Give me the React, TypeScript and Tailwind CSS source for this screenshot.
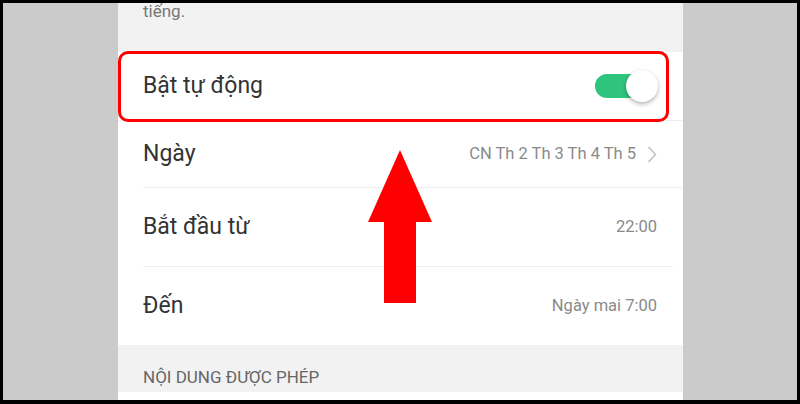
import React from 'react';

const rows = [
  { label: 'Ngày', value: 'CN Th 2 Th 3 Th 4 Th 5', chevron: true, h: 'h-[66px]', line: 'mr-0' },
  { label: 'Bắt đầu từ', value: '22:00', chevron: false, h: 'h-[78px]', line: 'mr-[10px]' },
  { label: 'Đến', value: 'Ngày mai 7:00', chevron: false, h: 'h-[78px]', line: '' },
];

function Toggle() {
  return (
    <div className="relative w-[63px] h-[32px]">
      <div className="absolute left-0 top-[4px] w-[50px] h-[24px] rounded-full bg-[#2ec47e]" />
      <div className="absolute right-0 top-0 w-[32px] h-[32px] rounded-full bg-white shadow-[0_2px_4px_rgba(0,0,0,0.3)]" />
    </div>
  );
}

function Chevron() {
  return (
    <svg width="10" height="17" viewBox="0 0 10 17" fill="none">
      <path d="M1.5 1 L8.5 8.5 L1.5 16" stroke="#bdbdbd" strokeWidth="1.4" />
    </svg>
  );
}

export default function App() {
  return (
    <div
      className="w-[800px] h-[404px] bg-black pt-[3px] pl-[3px] pr-[3px] pb-[4px] overflow-hidden"
      style={{ fontFamily: 'Roboto, "Noto Sans", sans-serif' }}
    >
      <div className="flex h-full bg-[#cbcbcb]">
        <div className="w-[115px] shrink-0" />

        {/* phone screen */}
        <div className="relative w-[565px] shrink-0 flex flex-col bg-white overflow-hidden">
          <div className="h-[49px] bg-[#f2f2f2] pl-[25px]">
            <p className="-mt-[2px] text-[17px] leading-[20px] text-[#777]">tiếng.</p>
          </div>

          <div className="h-[68px] flex items-center justify-between pl-[25px] pr-[25px]">
            <span className="text-[23px] text-[#333]">Bật tự động</span>
            <Toggle />
          </div>
          <div className="h-px bg-[#eeeeee]" />

          {rows.map((r, i) => (
            <div key={r.label}>
              <div className={`${r.h} flex items-center justify-between pl-[25px] pr-[26px]`}>
                <span className="text-[23px] text-[#333]">{r.label}</span>
                <div className="flex items-center gap-[11px]">
                  <span className="text-[16.5px] text-[#8a8a8a]">{r.value}</span>
                  {r.chevron && <Chevron />}
                </div>
              </div>
              {i < rows.length - 1 && <div className={`h-px ml-[25px] bg-[#eeeeee] ${r.line}`} />}
            </div>
          ))}

          <div className="h-[47px] bg-[#f2f2f2] pl-[25px] pt-[22px]">
            <p className="text-[17px] leading-[20px] text-[#666]">NỘI DUNG ĐƯỢC PHÉP</p>
          </div>
          <div className="flex-1 bg-white" />

          {/* red highlight around the first row */}
          <div className="absolute left-0 top-[48px] w-[551px] h-[71px] border-[3px] border-[#ff0000] rounded-[10px]" />

          {/* red arrow */}
          <svg className="absolute left-[250px] top-[147px]" width="64" height="153" viewBox="0 0 64 153">
            <polygon points="32,0 64,72 48,72 48,153 16,153 16,72 0,72" fill="#ff0000" />
          </svg>
        </div>

        <div className="flex-1" />
      </div>
    </div>
  );
}
